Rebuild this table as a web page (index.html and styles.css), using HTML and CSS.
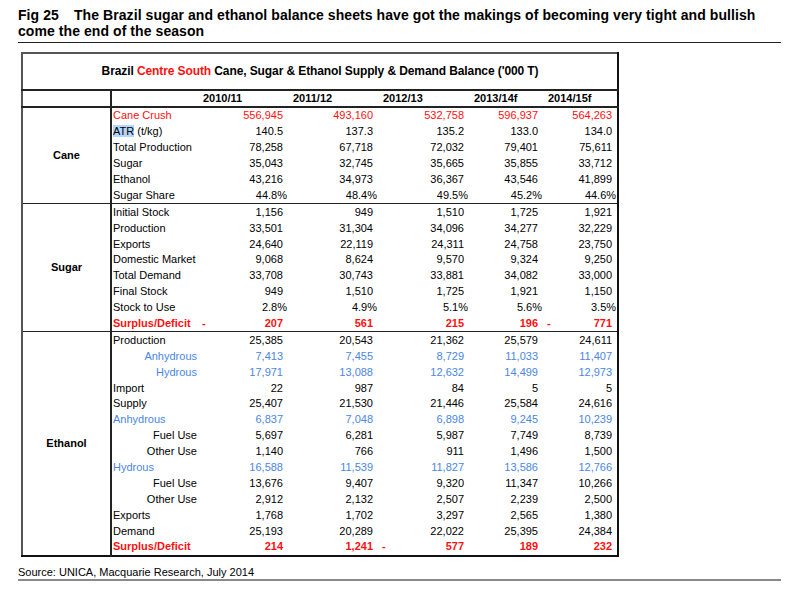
FILE: index.html
```html
<!DOCTYPE html>
<html>
  <head>
    <title>Fig 25 - Brazil sugar and ethanol balance</title>
    <link rel="stylesheet" href="styles.css">
  </head>
  <body>
    <div class="page">
      <h1 class="fig-title">
        <span class="fig-no">Fig 25</span><span>The Brazil sugar and ethanol balance sheets have got the makings of becoming very tight and bullish</span><br>
        <span>come the end of the season</span>
      </h1>

      <table class="balance">
        <colgroup>
          <col class="c-sec">
          <col class="c-label">
          <col class="c-wide">
          <col class="c-wide">
          <col class="c-wide3">
          <col class="c-narrow">
          <col class="c-narrow5">
        </colgroup>
        <thead>
          <tr class="caption-row">
            <th colspan="7">Brazil <span class="red">Centre South</span> Cane, Sugar &amp; Ethanol Supply &amp; Demand Balance ('000 T)</th>
          </tr>
          <tr class="years">
            <th class="sec"></th>
            <th></th>
            <th>2010/11</th>
            <th>2011/12</th>
            <th>2012/13</th>
            <th>2013/14f</th>
            <th>2014/15f</th>
          </tr>
        </thead>

        <tbody>
          <tr class="red">
            <td class="sec" rowspan="6">Cane</td>
            <td class="lbl">Cane Crush</td>
            <td>556,945</td><td>493,160</td><td>532,758</td><td>596,937</td><td>564,263</td>
          </tr>
          <tr>
            <td class="lbl"><span class="hl">ATR</span> (t/kg)</td>
            <td>140.5</td><td>137.3</td><td>135.2</td><td>133.0</td><td>134.0</td>
          </tr>
          <tr>
            <td class="lbl">Total Production</td>
            <td>78,258</td><td>67,718</td><td>72,032</td><td>79,401</td><td>75,611</td>
          </tr>
          <tr>
            <td class="lbl">Sugar</td>
            <td>35,043</td><td>32,745</td><td>35,665</td><td>35,855</td><td>33,712</td>
          </tr>
          <tr>
            <td class="lbl">Ethanol</td>
            <td>43,216</td><td>34,973</td><td>36,367</td><td>43,546</td><td>41,899</td>
          </tr>
          <tr class="pct">
            <td class="lbl">Sugar Share</td>
            <td>44.8%</td><td>48.4%</td><td>49.5%</td><td>45.2%</td><td>44.6%</td>
          </tr>
        </tbody>

        <tbody>
          <tr>
            <td class="sec" rowspan="8">Sugar</td>
            <td class="lbl">Initial Stock</td>
            <td>1,156</td><td>949</td><td>1,510</td><td>1,725</td><td>1,921</td>
          </tr>
          <tr>
            <td class="lbl">Production</td>
            <td>33,501</td><td>31,304</td><td>34,096</td><td>34,277</td><td>32,229</td>
          </tr>
          <tr>
            <td class="lbl">Exports</td>
            <td>24,640</td><td>22,119</td><td>24,311</td><td>24,758</td><td>23,750</td>
          </tr>
          <tr>
            <td class="lbl">Domestic Market</td>
            <td>9,068</td><td>8,624</td><td>9,570</td><td>9,324</td><td>9,250</td>
          </tr>
          <tr>
            <td class="lbl">Total Demand</td>
            <td>33,708</td><td>30,743</td><td>33,881</td><td>34,082</td><td>33,000</td>
          </tr>
          <tr>
            <td class="lbl">Final Stock</td>
            <td>949</td><td>1,510</td><td>1,725</td><td>1,921</td><td>1,150</td>
          </tr>
          <tr class="pct">
            <td class="lbl">Stock to Use</td>
            <td>2.8%</td><td>4.9%</td><td>5.1%</td><td>5.6%</td><td>3.5%</td>
          </tr>
          <tr class="red bold">
            <td class="lbl">Surplus/Deficit</td>
            <td><span class="neg">-</span>207</td><td>561</td><td>215</td><td>196</td><td><span class="neg">-</span>771</td>
          </tr>
        </tbody>

        <tbody>
          <tr>
            <td class="sec" rowspan="14">Ethanol</td>
            <td class="lbl">Production</td>
            <td>25,385</td><td>20,543</td><td>21,362</td><td>25,579</td><td>24,611</td>
          </tr>
          <tr class="blue">
            <td class="lbl right">Anhydrous</td>
            <td>7,413</td><td>7,455</td><td>8,729</td><td>11,033</td><td>11,407</td>
          </tr>
          <tr class="blue">
            <td class="lbl right">Hydrous</td>
            <td>17,971</td><td>13,088</td><td>12,632</td><td>14,499</td><td>12,973</td>
          </tr>
          <tr>
            <td class="lbl">Import</td>
            <td>22</td><td>987</td><td>84</td><td>5</td><td>5</td>
          </tr>
          <tr>
            <td class="lbl">Supply</td>
            <td>25,407</td><td>21,530</td><td>21,446</td><td>25,584</td><td>24,616</td>
          </tr>
          <tr class="blue">
            <td class="lbl">Anhydrous</td>
            <td>6,837</td><td>7,048</td><td>6,898</td><td>9,245</td><td>10,239</td>
          </tr>
          <tr>
            <td class="lbl right">Fuel Use</td>
            <td>5,697</td><td>6,281</td><td>5,987</td><td>7,749</td><td>8,739</td>
          </tr>
          <tr>
            <td class="lbl right">Other Use</td>
            <td>1,140</td><td>766</td><td>911</td><td>1,496</td><td>1,500</td>
          </tr>
          <tr class="blue">
            <td class="lbl">Hydrous</td>
            <td>16,588</td><td>11,539</td><td>11,827</td><td>13,586</td><td>12,766</td>
          </tr>
          <tr>
            <td class="lbl right">Fuel Use</td>
            <td>13,676</td><td>9,407</td><td>9,320</td><td>11,347</td><td>10,266</td>
          </tr>
          <tr>
            <td class="lbl right">Other Use</td>
            <td>2,912</td><td>2,132</td><td>2,507</td><td>2,239</td><td>2,500</td>
          </tr>
          <tr>
            <td class="lbl">Exports</td>
            <td>1,768</td><td>1,702</td><td>3,297</td><td>2,565</td><td>1,380</td>
          </tr>
          <tr>
            <td class="lbl">Demand</td>
            <td>25,193</td><td>20,289</td><td>22,022</td><td>25,395</td><td>24,384</td>
          </tr>
          <tr class="red bold">
            <td class="lbl">Surplus/Deficit</td>
            <td>214</td><td>1,241</td><td><span class="neg">-</span>577</td><td>189</td><td>232</td>
          </tr>
        </tbody>
      </table>

      <p class="source">Source: UNICA, Macquarie Research, July 2014</p>
    </div>
  </body>
</html>
```

FILE: styles.css
```css
body {
  margin: 0;
  background: #fff;
  color: #000;
  font-family: "Liberation Sans", Arial, sans-serif;
}
.page {
  padding: 7px 0 0 18px;
}
.fig-title {
  width: 763px;
  margin: 0;
  padding-bottom: 3px;
  border-bottom: 1px solid #222;
  font-size: 14px;
  line-height: 16px;
  font-weight: bold;
  letter-spacing: 0.07px;
}
.fig-no {
  display: inline-block;
  width: 56px;
}

.balance {
  width: 596px;
  margin: 9px 0 0 3px;
  border-collapse: collapse;
  table-layout: fixed;
  font-size: 11px;
  border-top: 2px solid #555;
  border-left: 2px solid #555;
  border-right: 2px solid #111;
  border-bottom: 2px solid #111;
}
.c-sec { width: 89px; }
.c-label { width: 87px; }
.c-wide { width: 90px; }
.c-wide3 { width: 91px; }
.c-narrow { width: 74px; }
.c-narrow5 { width: 75px; }

.balance th,
.balance td {
  padding: 0 5px 0 0;
  height: 15.9px;
  line-height: 13px;
  white-space: nowrap;
  text-align: right;
  vertical-align: middle;
}
.caption-row th {
  height: 35px;
  text-align: center;
  padding: 0;
  font-size: 12px;
  letter-spacing: -0.1px;
  border-bottom: 2px solid #222;
}
.years th {
  height: 15px;
  padding: 0 0 0 5px;
  text-align: left;
  border-bottom: 2px solid #222;
}
.balance tbody {
  border-top: 1px solid #222;
}
.balance .sec {
  padding: 0;
  color: #000;
  text-align: center;
  font-weight: bold;
  border-right: 2px solid #222;
}
.years th.sec {
  padding: 0;
}
.balance .lbl {
  padding: 0 0 0 1px;
  text-align: left;
}
.balance .lbl.right {
  padding: 0 1px 0 0;
  text-align: right;
}
.pct td {
  padding-right: 1px;
}
.neg {
  float: left;
  padding-left: 4px;
}

.red { color: #ff1010; }
.blue { color: #4a86e8; }
.bold { font-weight: bold; }
.hl { background: #b4d5fe; }

.source {
  width: 763px;
  margin: 9px 0 0;
  padding-bottom: 0;
  border-bottom: 2px solid #8a8a8a;
  font-size: 11px;
  line-height: 13px;
}
```
